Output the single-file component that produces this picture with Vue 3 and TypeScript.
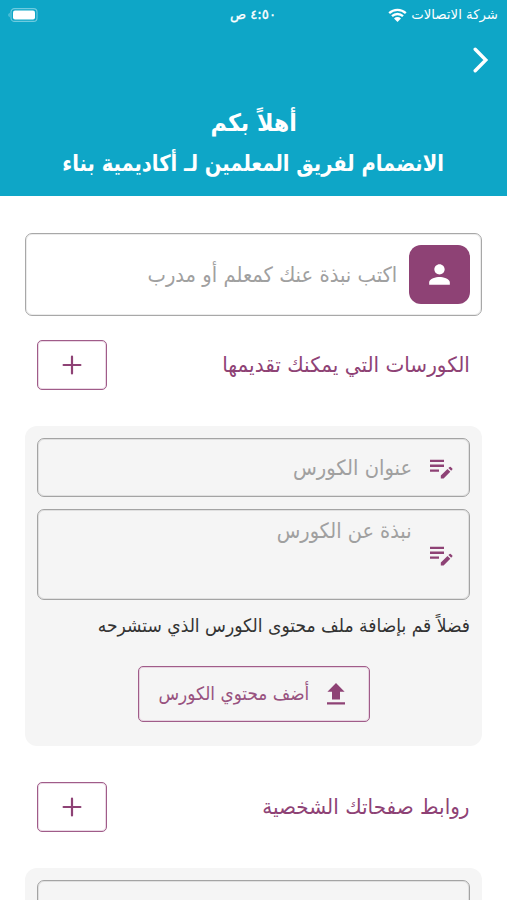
<script setup lang="ts">
interface Section {
  title: string
  kind: 'courses' | 'links'
}

const sections: Section[] = [
  { title: 'الكورسات التي يمكنك تقديمها', kind: 'courses' },
  { title: 'روابط صفحاتك الشخصية', kind: 'links' },
]
</script>

<template>
  <div class="screen" dir="rtl">
    <header class="header">
      <div class="status">
        <div class="carrier">
          <span class="t t-carrier">شركة الاتصالات</span>
          <svg class="wifi" viewBox="0 0 19 14">
            <path d="M1.2 5.2a12 12 0 0 1 16.6 0M4 8.2a8 8 0 0 1 11 0" fill="none" stroke="#fff" stroke-width="2.3" />
            <path d="M6 10.5a5 5 0 0 1 7 0L9.5 14z" fill="#fff" />
          </svg>
        </div>
        <span class="t t-time">٤:٥٠ ص</span>
        <svg class="battery" viewBox="0 0 30 14">
          <rect x="3" y="0.6" width="26" height="12.8" rx="3.5" fill="none" stroke="#6fcbdf" stroke-width="1.1" />
          <rect x="5" y="2.4" width="22" height="9.2" rx="2" fill="#fff" />
          <path d="M1.6 4.8v4.4a2.6 2.6 0 0 1 0-4.4z" fill="#6fcbdf" />
        </svg>
      </div>
      <svg class="back" viewBox="0 0 16 26">
        <path d="M2.2 2.2 12.8 13 2.2 23.8" fill="none" stroke="#fff" stroke-width="3.4" stroke-linecap="round" />
      </svg>
      <h1 class="heading"><span class="t t-hello">أهلاً بكم</span></h1>
      <h2 class="heading"><span class="t t-join">الانضمام لفريق المعلمين لـ أكاديمية بناء</span></h2>
    </header>

    <main class="content">
      <div class="bio">
        <div class="avatar">
          <svg viewBox="0 0 24 24" width="31" height="31">
            <path fill="#fff" d="M12 12c2.21 0 4-1.79 4-4s-1.79-4-4-4-4 1.79-4 4 1.79 4 4 4zm0 2c-2.67 0-8 1.34-8 4v2h16v-2c0-2.66-5.33-4-8-4z" />
          </svg>
        </div>
        <span class="t t-bio">اكتب نبذة عنك كمعلم أو مدرب</span>
      </div>

      <section v-for="section in sections" :key="section.kind" class="section" :class="section.kind">
        <div class="section-head">
          <span class="t t-section">{{ section.title }}</span>
          <button class="add" type="button">
            <svg viewBox="0 0 20 20" width="20" height="20">
              <path d="M10 1.6v16.8M1.6 10h16.8" stroke="#8e4275" stroke-width="2.2" stroke-linecap="round" />
            </svg>
          </button>
        </div>

        <div v-if="section.kind === 'courses'" class="panel">
          <div class="field">
            <svg class="edit" viewBox="0 0 24 20">
              <path d="M1 1.9h14M1 6.8h14M1 11.6h9" stroke="#8e4275" stroke-width="2.4" />
              <path d="m11.8 16.6 6.7-6.7 2.8 2.8-6.7 6.7h-2.8zM19.4 9l1.2-1.1q.6-.5 1.2 0l1.5 1.5q.6.6 0 1.2l-1.1 1.2z" fill="#8e4275" />
            </svg>
            <span class="t t-name">عنوان الكورس</span>
          </div>
          <div class="field tall">
            <svg class="edit" viewBox="0 0 24 20">
              <path d="M1 1.9h14M1 6.8h14M1 11.6h9" stroke="#8e4275" stroke-width="2.4" />
              <path d="m11.8 16.6 6.7-6.7 2.8 2.8-6.7 6.7h-2.8zM19.4 9l1.2-1.1q.6-.5 1.2 0l1.5 1.5q.6.6 0 1.2l-1.1 1.2z" fill="#8e4275" />
            </svg>
            <span class="t t-about">نبذة عن الكورس</span>
          </div>
          <p class="note"><span class="t t-note">فضلاً قم بإضافة ملف محتوى الكورس الذي ستشرحه</span></p>
          <button class="upload" type="button">
            <svg class="upload-icon" viewBox="0 0 18 22">
              <path d="M9 0 17.6 8.8H13V16.6H5V8.8H.4zM0 19.2h18v2.4H0z" fill="#8e4275" />
            </svg>
            <span class="t t-upload">أضف محتوي الكورس</span>
          </button>
        </div>
        <div v-else class="panel">
          <div class="field"></div>
        </div>
      </section>
    </main>
  </div>
</template>

<style>
body {
  margin: 0;
  overflow: hidden;
}
</style>

<style scoped>
.screen {
  width: 507px;
  height: 900px;
  overflow: hidden;
  background: #fff;
  font-family: "DejaVu Sans", sans-serif;
  color: #8e4275;
}
.screen * {
  box-sizing: border-box;
}
.t {
  display: block;
  white-space: nowrap;
  line-height: 30px;
  transform-origin: 100% 50%;
}
.header {
  height: 196px;
  background: #0ea6c7;
  color: #fff;
}
.status {
  display: grid;
  grid-template-columns: 1fr auto 1fr;
  align-items: center;
  height: 27px;
  padding: 0 9px 0 8px;
}
.carrier {
  display: flex;
  align-items: center;
  gap: 4px;
}
.t-carrier {
  font-size: 13.3px;
}
.t-time {
  font-size: 13.3px;
  -webkit-text-stroke: 0.3px #fff;
}
.wifi {
  flex: none;
  width: 19px;
  height: 14px;
}
.battery {
  width: 30px;
  height: 14px;
  justify-self: end;
}
.back {
  display: block;
  width: 16px;
  height: 26px;
  margin: 20px 18px 0 0;
}
.heading {
  display: flex;
  justify-content: center;
  height: 40px;
  margin: 0;
  align-items: center;
}
h1.heading {
  margin-top: 30px;
}
.heading .t {
  transform-origin: center;
}
.t-hello {
  font-size: 24px;
  transform: scaleX(0.925);
}
.t-join {
  font-size: 22.5px;
  transform: scaleX(0.867);
}
.content {
  padding: 37px 25px 0 25px;
}
.bio {
  display: flex;
  align-items: center;
  gap: 12px;
  height: 83px;
  padding: 0 11px;
  border: 1px solid #a8a8a8;
  box-shadow: inset 0 0 0 1px #ececec;
  border-radius: 7px;
  color: #a0a0a0;
}
.avatar {
  display: flex;
  align-items: center;
  justify-content: center;
  width: 61px;
  height: 59px;
  border-radius: 12px;
  background: #8e4275;
}
.t-bio {
  font-size: 21px;
  transform: scaleX(0.931);
}
.section {
  padding-top: 24px;
}
.section.links {
  padding-top: 36px;
}
.section-head {
  display: flex;
  align-items: center;
  justify-content: space-between;
  height: 50px;
  padding: 0 12px;
}
.t-section {
  font-size: 21px;
  transform: scaleX(0.953);
}
.add {
  display: flex;
  align-items: center;
  justify-content: center;
  width: 70px;
  height: 50px;
  padding: 0;
  border: 1px solid #a05c89;
  box-shadow: inset 0 0 0 1px #ead9e5;
  border-radius: 5px;
  background: transparent;
}
.panel {
  display: flex;
  flex-direction: column;
  align-items: center;
  height: 320px;
  margin-top: 36px;
  padding: 12px;
  border-radius: 12px;
  background: #f5f5f5;
}
.field {
  display: flex;
  align-items: center;
  gap: 17px;
  flex: none;
  width: 433px;
  height: 59px;
  padding: 0 16px;
  border: 1px solid #a4a4a4;
  box-shadow: inset 0 0 0 1px #e0e0e0;
  border-radius: 7px;
  color: #a0a0a0;
}
.field.tall {
  height: 91px;
  margin-top: 12px;
}
.edit {
  flex: none;
  width: 24px;
  height: 20px;
  margin-top: 2px;
}
.t-name {
  font-size: 21px;
  transform: scaleX(0.93);
}
.t-about {
  font-size: 21px;
  transform: scaleX(0.92);
}
.field.tall .t {
  align-self: flex-start;
  margin-top: 6px;
}
.note {
  width: 433px;
  margin: 11px 0 0;
  color: #333;
}
.t-note {
  font-size: 18.5px;
  transform: scaleX(0.926);
}
.upload {
  display: flex;
  align-items: center;
  gap: 17px;
  width: 232px;
  height: 56px;
  margin-top: 25px;
  padding: 0 24px;
  border: 1px solid #a05c89;
  box-shadow: inset 0 0 0 1px #e6d3e0;
  border-radius: 5px;
  background: transparent;
  font-family: inherit;
  color: #98527f;
}
.upload-icon {
  flex: none;
  width: 18px;
  height: 22px;
}
.t-upload {
  font-size: 18.5px;
  transform: scaleX(0.913);
}
</style>
